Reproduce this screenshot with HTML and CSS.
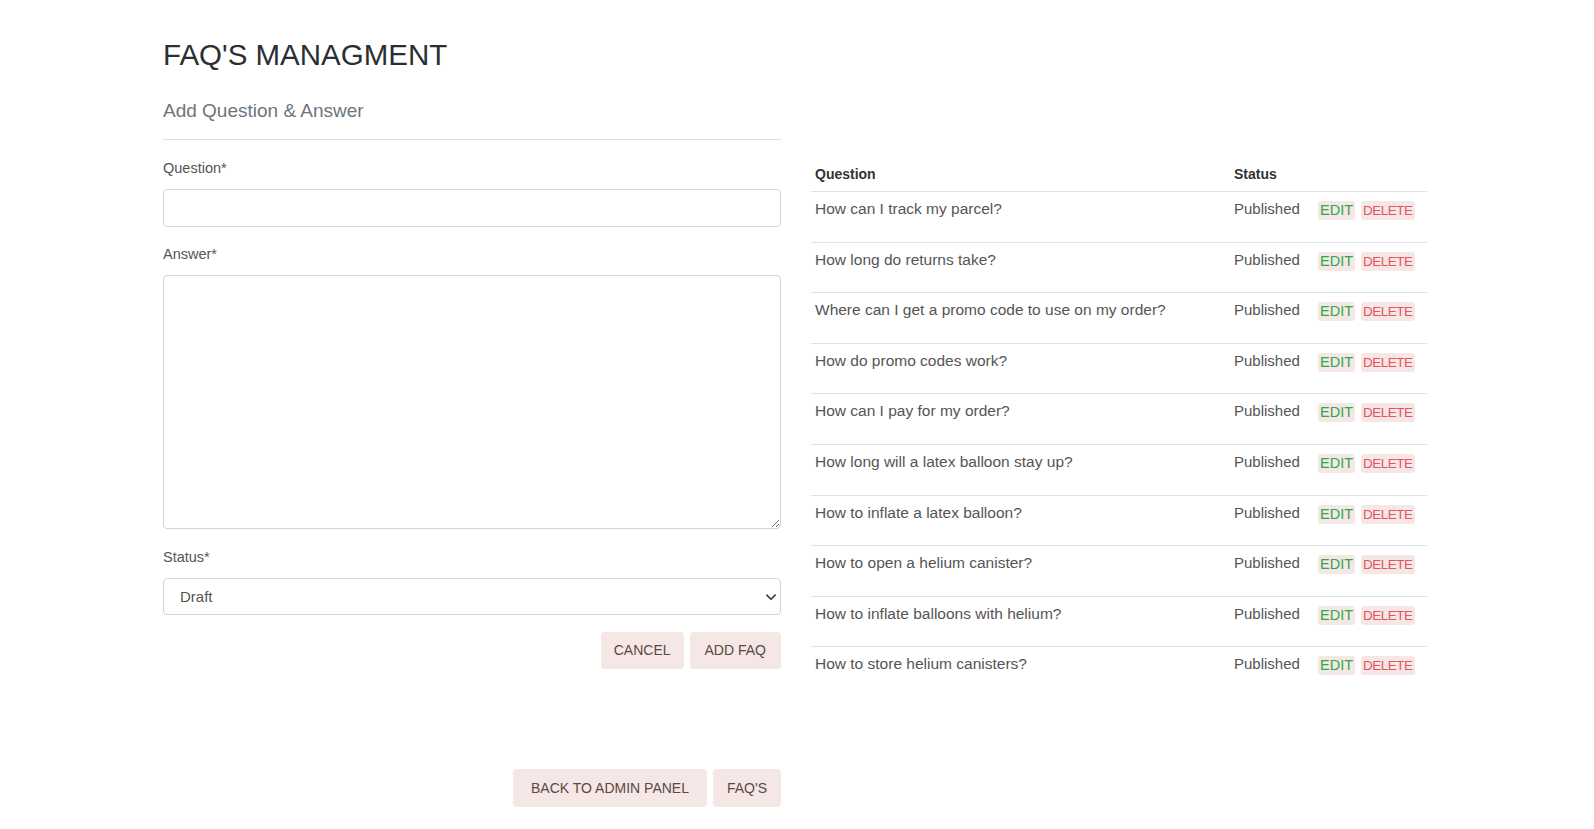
FILE: index.html
```html
<!DOCTYPE html>
<html lang="en">
<head>
<meta charset="utf-8">
<title>FAQ's Managment</title>
<link rel="stylesheet" href="styles.css">
</head>
<body>
<div class="page">
  <div class="cols">
    <div class="left">
      <h1 class="title">FAQ'S MANAGMENT</h1>
      <h2 class="subtitle">Add Question &amp; Answer</h2>
      <hr class="rule">
      <form class="faq-form">
        <div class="group">
          <label class="lbl">Question*</label>
          <input class="field" type="text">
        </div>
        <div class="group">
          <label class="lbl">Answer*</label>
          <textarea class="field area"></textarea>
        </div>
        <div class="group">
          <label class="lbl">Status*</label>
          <div class="select-wrap">
            <div class="field select">Draft</div>
            <svg class="chev" viewBox="0 0 16 16" width="12" height="12"><path d="M2.5 5.5 L8 11 L13.5 5.5" fill="none" stroke="#343a40" stroke-width="2.2" stroke-linecap="round" stroke-linejoin="round"/></svg>
          </div>
        </div>
        <div class="actions">
          <button type="button" class="btn">CANCEL</button>
          <button type="button" class="btn">ADD FAQ</button>
        </div>
      </form>
      <div class="nav-actions">
        <button type="button" class="btn">BACK TO ADMIN PANEL</button>
        <button type="button" class="btn">FAQ'S</button>
      </div>
    </div>
    <div class="right">
      <table class="faq-table">
        <thead>
          <tr><th class="c-q">Question</th><th class="c-s">Status</th><th class="c-a"></th></tr>
        </thead>
        <tbody>
          <tr><td>How can I track my parcel?</td><td>Published</td><td><span class="tag edit">EDIT</span><span class="tag del">DELETE</span></td></tr>
          <tr><td>How long do returns take?</td><td>Published</td><td><span class="tag edit">EDIT</span><span class="tag del">DELETE</span></td></tr>
          <tr><td>Where can I get a promo code to use on my order?</td><td>Published</td><td><span class="tag edit">EDIT</span><span class="tag del">DELETE</span></td></tr>
          <tr><td>How do promo codes work?</td><td>Published</td><td><span class="tag edit">EDIT</span><span class="tag del">DELETE</span></td></tr>
          <tr><td>How can I pay for my order?</td><td>Published</td><td><span class="tag edit">EDIT</span><span class="tag del">DELETE</span></td></tr>
          <tr><td>How long will a latex balloon stay up?</td><td>Published</td><td><span class="tag edit">EDIT</span><span class="tag del">DELETE</span></td></tr>
          <tr><td>How to inflate a latex balloon?</td><td>Published</td><td><span class="tag edit">EDIT</span><span class="tag del">DELETE</span></td></tr>
          <tr><td>How to open a helium canister?</td><td>Published</td><td><span class="tag edit">EDIT</span><span class="tag del">DELETE</span></td></tr>
          <tr><td>How to inflate balloons with helium?</td><td>Published</td><td><span class="tag edit">EDIT</span><span class="tag del">DELETE</span></td></tr>
          <tr><td>How to store helium canisters?</td><td>Published</td><td><span class="tag edit">EDIT</span><span class="tag del">DELETE</span></td></tr>
        </tbody>
      </table>
    </div>
  </div>
</div>
</body>
</html>
```

FILE: styles.css
```css
* { box-sizing: border-box; }
html, body { margin: 0; padding: 0; background: #fff; }
body {
  font-family: "Liberation Sans", Arial, sans-serif;
  color: #555;
  font-size: 15px;
}
.page { padding-left: 163px; }
.cols { display: flex; gap: 30px; align-items: flex-start; }
.left { width: 618px; }
.right { width: 616px; padding-top: 158px; }

.title {
  margin: 36px 0 0;
  font-size: 29.5px;
  line-height: 38px;
  font-weight: normal;
  color: #2b2f33;
}
.subtitle {
  margin: 25px 0 0;
  font-size: 19px;
  line-height: 24px;
  font-weight: normal;
  color: #6c757d;
}
.rule { margin: 16px 0 0; border: 0; border-top: 1px solid #e0e0e0; }

.faq-form { margin-top: 18px; }
.group { margin-bottom: 18px; }
.group + .group { margin-top: -0.5px; }
.lbl {
  display: block;
  font-size: 14.5px;
  line-height: 20px;
  color: #555;
  margin-bottom: 11px;
}
.field {
  display: block;
  width: 100%;
  height: 37.5px;
  border: 1px solid #ced4da;
  border-radius: 4px;
  background: #fff;
  font-family: inherit;
  font-size: 15px;
  color: #555;
  padding: 0 16px;
}
.area { height: 254px; resize: vertical; padding: 8px 16px; }
.select-wrap { position: relative; }
.select { line-height: 35.5px; }
.chev { position: absolute; right: 4px; top: 13px; }

.actions { display: flex; justify-content: flex-end; gap: 6px; margin-top: -1.5px; }
.btn {
  font-family: inherit;
  font-size: 14px;
  height: 37.5px;
  padding: 0 13px;
  border: 0;
  border-radius: 4px;
  background: #f4e7e5;
  color: #5e4742;
  cursor: pointer;
}
.actions .btn:last-child { padding: 0 15px; }
.nav-actions { display: flex; justify-content: flex-end; gap: 6px; margin-top: 100px; }
.nav-actions .btn:first-child { padding: 0 18px; }
.nav-actions .btn:last-child { padding: 0 14px; }

.faq-table { width: 100%; border-collapse: collapse; }
.faq-table th {
  text-align: left;
  font-size: 14px;
  font-weight: bold;
  color: #333;
  padding: 7px 4px 8px;
  line-height: 18px;
  border-bottom: 1px solid #dee2e6;
}
.faq-table tbody tr { height: 50.6px; }
.faq-table tbody tr + tr td { border-top: 1px solid #dee2e6; }
.faq-table td {
  vertical-align: top;
  padding: 8px 4px 0;
  line-height: 18px;
  font-size: 15.5px;
  color: #555;
}
.faq-table td:nth-child(2) { font-size: 15px; }
.c-q { width: 419px; }
.c-s { width: 84px; }
.tag {
  display: inline-block;
  line-height: 19px;
  padding: 0 2px;
  border-radius: 3px;
  background: #f4e7e5;
  margin-top: 1px;
  vertical-align: top;
}
.tag + .tag { margin-left: 6px; }
.edit { color: #2fa84a; font-size: 14.5px; }
.del { color: #e5535f; font-size: 13.5px; letter-spacing: -0.5px; }
```
